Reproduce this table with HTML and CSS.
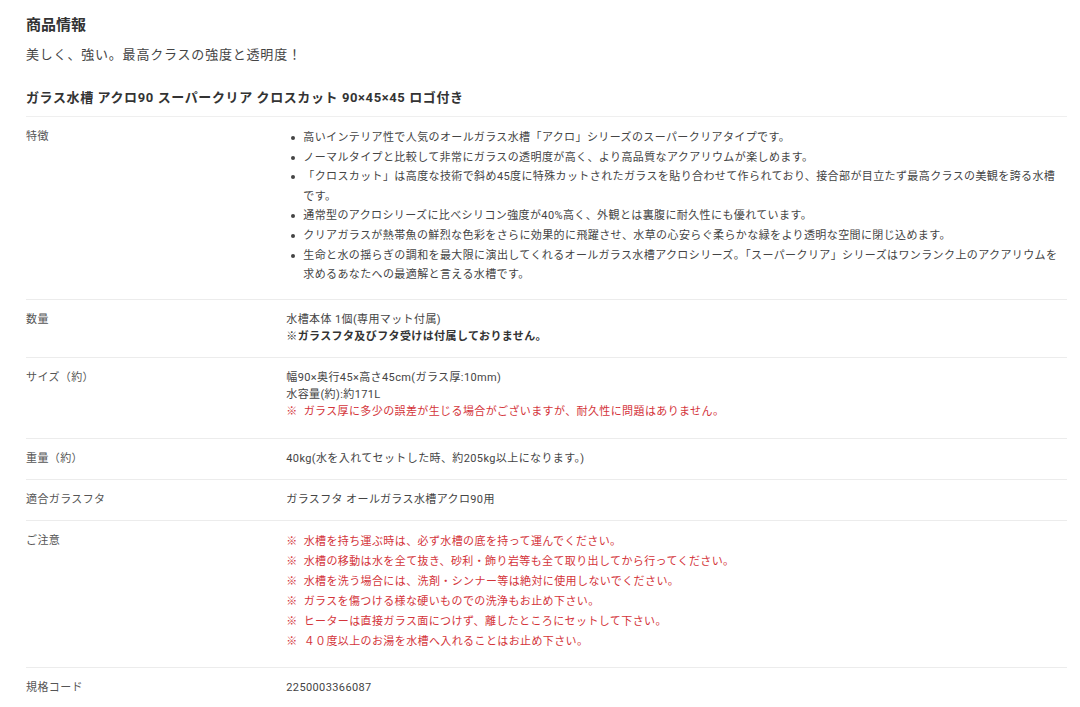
FILE: index.html
```html
<!DOCTYPE html>
<html lang="ja">
<head>
  <meta charset="UTF-8" />
  <meta name="viewport" content="width=device-width, initial-scale=1" />
  <title>商品情報</title>
  <link rel="stylesheet" href="styles.css">
</head>
<body>

<div class="product-info">
  <h2 class="section-title">商品情報</h2>
  <p class="catch">美しく、強い。最高クラスの強度と透明度！</p>
  <h3 class="product-name">ガラス水槽 アクロ90 スーパークリア クロスカット 90×45×45 ロゴ付き</h3>

  <div class="spec-table">
    <div class="spec-row">
      <div class="spec-label">特徴</div>
      <div class="spec-value">
        <ul class="feature-list">
          <li>高いインテリア性で人気のオールガラス水槽「アクロ」シリーズのスーパークリアタイプです。</li>
          <li>ノーマルタイプと比較して非常にガラスの透明度が高く、より高品質なアクアリウムが楽しめます。</li>
          <li>「クロスカット」は高度な技術で斜め45度に特殊カットされたガラスを貼り合わせて作られており、接合部が目立たず最高クラスの美観を誇る水槽です。</li>
          <li>通常型のアクロシリーズに比べシリコン強度が40%高く、外観とは裏腹に耐久性にも優れています。</li>
          <li>クリアガラスが熱帯魚の鮮烈な色彩をさらに効果的に飛躍させ、水草の心安らぐ柔らかな緑をより透明な空間に閉じ込めます。</li>
          <li>生命と水の揺らぎの調和を最大限に演出してくれるオールガラス水槽アクロシリーズ。「スーパークリア」シリーズはワンランク上のアクアリウムを求めるあなたへの最適解と言える水槽です。</li>
        </ul>
      </div>
    </div>

    <div class="spec-row">
      <div class="spec-label">数量</div>
      <div class="spec-value">
        水槽本体 1個(専用マット付属)<br>
        <strong>※ガラスフタ及びフタ受けは付属しておりません。</strong>
      </div>
    </div>

    <div class="spec-row">
      <div class="spec-label">サイズ（約）</div>
      <div class="spec-value">
        幅90×奥行45×高さ45cm(ガラス厚:10mm)<br>
        水容量(約):約171L<br>
        <span class="red note">※&ensp;ガラス厚に多少の誤差が生じる場合がございますが、耐久性に問題はありません。</span>
      </div>
    </div>

    <div class="spec-row">
      <div class="spec-label">重量（約）</div>
      <div class="spec-value">40kg(水を入れてセットした時、約205kg以上になります。)</div>
    </div>

    <div class="spec-row">
      <div class="spec-label">適合ガラスフタ</div>
      <div class="spec-value">ガラスフタ オールガラス水槽アクロ90用</div>
    </div>

    <div class="spec-row">
      <div class="spec-label">ご注意</div>
      <div class="spec-value">
        <div class="caution red">
          ※&ensp;水槽を持ち運ぶ時は、必ず水槽の底を持って運んでください。<br>
          ※&ensp;水槽の移動は水を全て抜き、砂利・飾り岩等も全て取り出してから行ってください。<br>
          ※&ensp;水槽を洗う場合には、洗剤・シンナー等は絶対に使用しないでください。<br>
          ※&ensp;ガラスを傷つける様な硬いものでの洗浄もお止め下さい。<br>
          ※&ensp;ヒーターは直接ガラス面につけず、離したところにセットして下さい。<br>
          ※&ensp;４０度以上のお湯を水槽へ入れることはお止め下さい。
        </div>
      </div>
    </div>

    <div class="spec-row last">
      <div class="spec-label">規格コード</div>
      <div class="spec-value">2250003366087</div>
    </div>
  </div>
</div>

</body>
</html>
```

FILE: styles.css
```css
* { box-sizing: border-box; margin: 0; padding: 0; }
body {
  font-family: Roboto, "Noto Sans CJK JP", sans-serif;
  background: #fff;
  color: #444;
}

.product-info {
  padding: 15px 13px 20px 26px;
}

.section-title {
  font-size: 15px;
  font-weight: 700;
  line-height: 20px;
  color: #333;
}

.catch {
  margin-top: 10px;
  font-size: 13px;
  line-height: 20px;
  letter-spacing: 0.8px;
  color: #444;
}

.product-name {
  margin-top: 23px;
  padding-bottom: 8px;
  font-size: 13px;
  font-weight: 700;
  line-height: 20px;
  letter-spacing: 0.6px;
  color: #333;
}

.spec-table {
  border-top: 1px solid #efefef;
  font-size: 11px;
  letter-spacing: 0.39px;
  line-height: 17px;
}

.spec-row {
  display: grid;
  grid-template-columns: 25% 1fr;
  padding: 11px 0 12px;
  border-bottom: 1px solid #ececec;
}
.spec-row.last { border-bottom: none; }

.spec-label { color: #555; }
.spec-value { color: #444; }
.spec-value strong { font-weight: 700; color: #333; }

.feature-list {
  list-style: none;
  padding: 0 3px 0 17px;
  margin-top: 0;
  margin-bottom: 2px;
  line-height: 19.6px;
}
.feature-list li { position: relative; }
/* bullet dot */
.feature-list li::before {
  content: "";
  position: absolute;
  left: -12px;
  top: 8px;
  width: 4px;
  height: 4px;
  border-radius: 50%;
  background: #444;
}

.red { color: #d4343a; }
.note { display: inline-block; padding-bottom: 6px; }

.caution {
  line-height: 20px;
  margin-bottom: 3px;
}
```
